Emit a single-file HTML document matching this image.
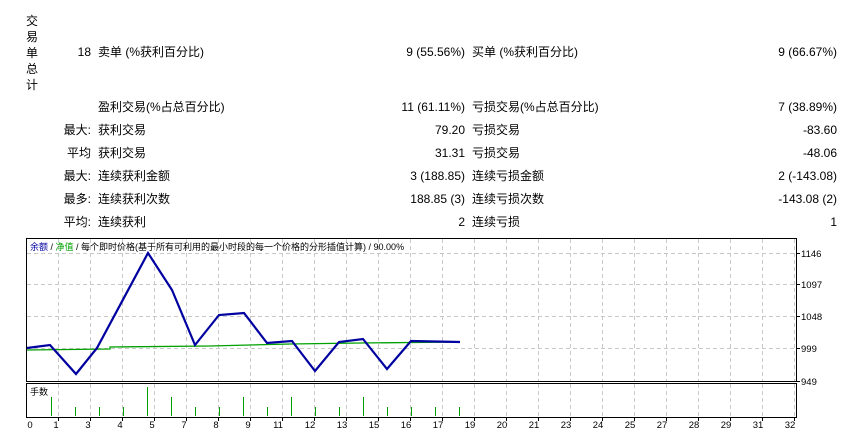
<!DOCTYPE html>
<html><head><meta charset="utf-8"><style>
body{margin:0;width:853px;height:437px;background:#fff;position:relative;overflow:hidden;font-family:"Liberation Sans","Noto Sans CJK SC",sans-serif;font-size:12px;color:#000}
.t{position:absolute;white-space:nowrap;line-height:14px}
.r{text-align:right}
.v{position:absolute;left:25px;width:14px;text-align:center;line-height:16px;font-size:12px}
</style></head><body>
<div class="v" style="top:13px">交<br>易<br>单<br>总<br>计</div>

<div class="t r" style="right:762px;top:45px">18</div>
<div class="t" style="left:98px;top:45px">卖单 (%获利百分比)</div>
<div class="t r" style="right:388px;top:45px">9 (55.56%)</div>
<div class="t" style="left:472px;top:45px">买单 (%获利百分比)</div>
<div class="t r" style="right:16px;top:45px">9 (66.67%)</div>

<div class="t" style="left:98px;top:100px">盈利交易(%占总百分比)</div>
<div class="t r" style="right:388px;top:100px">11 (61.11%)</div>
<div class="t" style="left:472px;top:100px">亏损交易(%占总百分比)</div>
<div class="t r" style="right:16px;top:100px">7 (38.89%)</div>

<div class="t r" style="right:762px;top:123px">最大:</div>
<div class="t" style="left:98px;top:123px">获利交易</div>
<div class="t r" style="right:388px;top:123px">79.20</div>
<div class="t" style="left:472px;top:123px">亏损交易</div>
<div class="t r" style="right:16px;top:123px">-83.60</div>

<div class="t r" style="right:762px;top:146px">平均</div>
<div class="t" style="left:98px;top:146px">获利交易</div>
<div class="t r" style="right:388px;top:146px">31.31</div>
<div class="t" style="left:472px;top:146px">亏损交易</div>
<div class="t r" style="right:16px;top:146px">-48.06</div>

<div class="t r" style="right:762px;top:169px">最大:</div>
<div class="t" style="left:98px;top:169px">连续获利金额</div>
<div class="t r" style="right:388px;top:169px">3 (188.85)</div>
<div class="t" style="left:472px;top:169px">连续亏损金额</div>
<div class="t r" style="right:16px;top:169px">2 (-143.08)</div>

<div class="t r" style="right:762px;top:192px">最多:</div>
<div class="t" style="left:98px;top:192px">连续获利次数</div>
<div class="t r" style="right:388px;top:192px">188.85 (3)</div>
<div class="t" style="left:472px;top:192px">连续亏损次数</div>
<div class="t r" style="right:16px;top:192px">-143.08 (2)</div>

<div class="t r" style="right:762px;top:215px">平均:</div>
<div class="t" style="left:98px;top:215px">连续获利</div>
<div class="t r" style="right:388px;top:215px">2</div>
<div class="t" style="left:472px;top:215px">连续亏损</div>
<div class="t r" style="right:16px;top:215px">1</div>

<svg width="853" height="437" style="position:absolute;left:0;top:0" font-family="Liberation Sans, Noto Sans CJK SC, sans-serif">
<g stroke="#c8c8c8" stroke-dasharray="4,3" stroke-width="1">
<path d="M58.5 239V381M90.5 239V381M122.5 239V381M154.5 239V381M186.5 239V381M218.5 239V381M250.5 239V381M282.5 239V381M314.5 239V381M346.5 239V381M378.5 239V381M410.5 239V381M442.5 239V381M474.5 239V381M506.5 239V381M538.5 239V381M570.5 239V381M602.5 239V381M634.5 239V381M666.5 239V381M698.5 239V381M730.5 239V381M762.5 239V381M794.5 239V381"/>
<path d="M58.5 384V417M90.5 384V417M122.5 384V417M154.5 384V417M186.5 384V417M218.5 384V417M250.5 384V417M282.5 384V417M314.5 384V417M346.5 384V417M378.5 384V417M410.5 384V417M442.5 384V417M474.5 384V417M506.5 384V417M538.5 384V417M570.5 384V417M602.5 384V417M634.5 384V417M666.5 384V417M698.5 384V417M730.5 384V417M762.5 384V417M794.5 384V417"/>
<path d="M27 253.5H797M27 284.5H797M27 316.5H797M27 348.5H797"/>
</g>
<rect x="26.5" y="238.5" width="770" height="143" fill="none" stroke="#000"/>
<rect x="26.5" y="383.5" width="770" height="34" fill="none" stroke="#000"/>
<g stroke="#000"><path d="M797 253.5h3M797 284.5h3M797 316.5h3M797 348.5h3M797 381.5h3"/>
<path d="M58.5 418v3M90.5 418v3M122.5 418v3M154.5 418v3M186.5 418v3M218.5 418v3M250.5 418v3M282.5 418v3M314.5 418v3M346.5 418v3M378.5 418v3M410.5 418v3M442.5 418v3M474.5 418v3M506.5 418v3M538.5 418v3M570.5 418v3M602.5 418v3M634.5 418v3M666.5 418v3M698.5 418v3M730.5 418v3M762.5 418v3M794.5 418v3"/></g>
<polyline fill="none" stroke="#00a000" stroke-width="1.3" points="27,350 110,349 110,347 210,346 290,344 360,343 460,342"/>
<polyline fill="none" stroke="#0000a0" stroke-width="2.2" points="27,348 50,345 76,374 97,348 148,253 172,290 195,345 219,315 244,313 267,343 292,341 315,371 339,342 363,339 387,369 411,341 460,342"/>
<g stroke="#00a000" stroke-width="1">
<path d="M51.5 397V416M75.5 407V416M99.5 407V416M123.5 407V416M147.5 387V416M171.5 397V416M195.5 407V416M219.5 407V416M243.5 397V416M267.5 407V416M291.5 397V416M315.5 407V416M339.5 407V416M363.5 397V416M387.5 407V416M411.5 407V416M435.5 407V416M459.5 407V416"/></g>
<text x="30" y="250" font-size="9"><tspan fill="#0000a0">余额</tspan> / <tspan fill="#00a000">净值</tspan> / 每个即时价格(基于所有可利用的最小时段的每一个价格的分形插值计算) / 90.00%</text>
<text x="30" y="395" font-size="9">手数</text>
<g font-size="9.5">
<text x="801" y="257">1146</text><text x="801" y="288">1097</text><text x="801" y="320">1048</text><text x="801" y="352">999</text><text x="801" y="385">949</text>
</g>
<g font-size="9.5" text-anchor="middle">
<text x="30" y="428">0</text><text x="56" y="428">1</text><text x="88" y="428">3</text><text x="120" y="428">4</text><text x="152" y="428">5</text><text x="184" y="428">7</text><text x="216" y="428">8</text><text x="248" y="428">9</text><text x="278" y="428">11</text><text x="310" y="428">12</text><text x="342" y="428">13</text><text x="374" y="428">15</text><text x="406" y="428">16</text><text x="438" y="428">17</text><text x="470" y="428">19</text><text x="502" y="428">20</text><text x="534" y="428">21</text><text x="566" y="428">23</text><text x="598" y="428">24</text><text x="630" y="428">25</text><text x="662" y="428">27</text><text x="694" y="428">28</text><text x="726" y="428">29</text><text x="758" y="428">31</text><text x="790" y="428">32</text>
</g>
</svg>
</body></html>
